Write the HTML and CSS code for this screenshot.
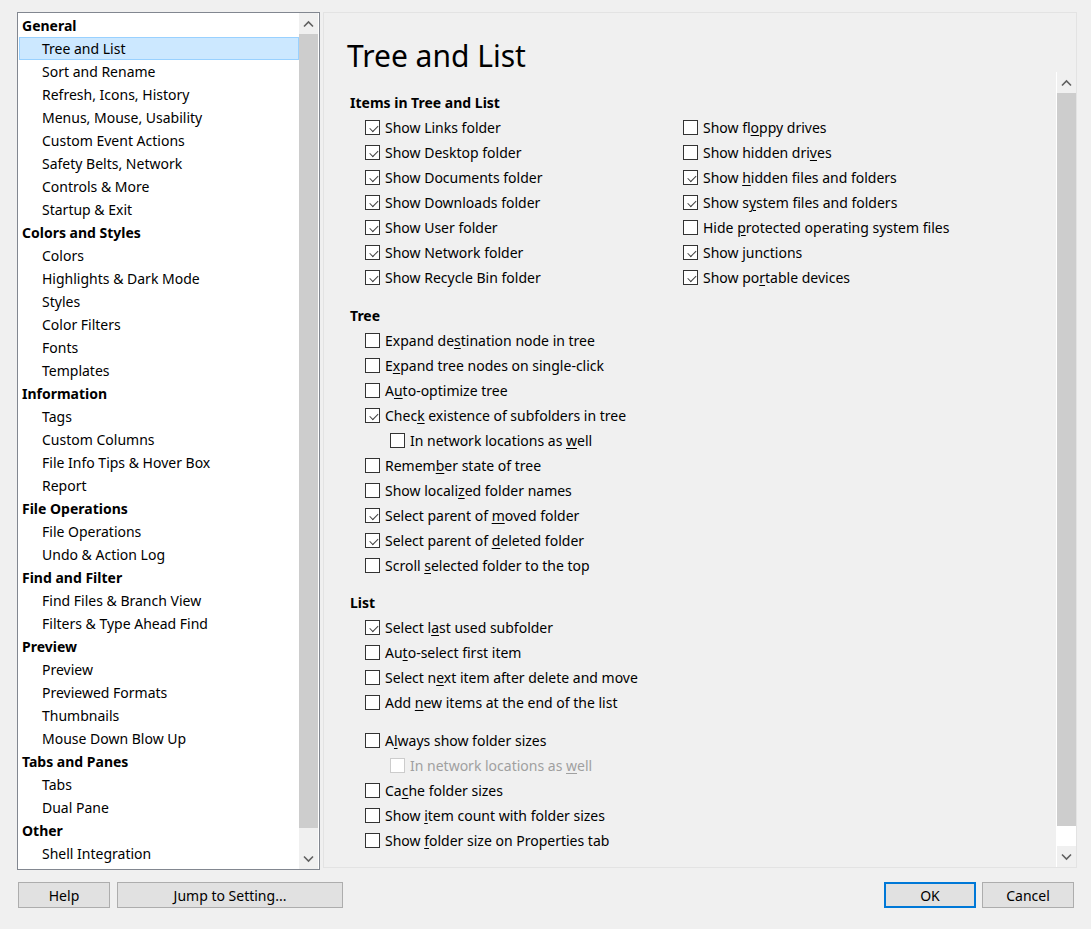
FILE: index.html
```html
<!DOCTYPE html>
<html lang="en">
<head>
    <meta charset="UTF-8">
    <meta name="viewport" content="width=device-width, initial-scale=1.0">
    <title>Tree and List</title>
    <link rel="stylesheet" href="styles.css">
</head>
<body>
    <div class="dialog">
        <div class="main">
            <div class="nav">
                <ul class="nav-list">
                    <li class="nav-group">General</li>
                    <li class="nav-item selected">Tree and List</li>
                    <li class="nav-item">Sort and Rename</li>
                    <li class="nav-item">Refresh, Icons, History</li>
                    <li class="nav-item">Menus, Mouse, Usability</li>
                    <li class="nav-item">Custom Event Actions</li>
                    <li class="nav-item">Safety Belts, Network</li>
                    <li class="nav-item">Controls &amp; More</li>
                    <li class="nav-item">Startup &amp; Exit</li>
                    <li class="nav-group">Colors and Styles</li>
                    <li class="nav-item">Colors</li>
                    <li class="nav-item">Highlights &amp; Dark Mode</li>
                    <li class="nav-item">Styles</li>
                    <li class="nav-item">Color Filters</li>
                    <li class="nav-item">Fonts</li>
                    <li class="nav-item">Templates</li>
                    <li class="nav-group">Information</li>
                    <li class="nav-item">Tags</li>
                    <li class="nav-item">Custom Columns</li>
                    <li class="nav-item">File Info Tips &amp; Hover Box</li>
                    <li class="nav-item">Report</li>
                    <li class="nav-group">File Operations</li>
                    <li class="nav-item">File Operations</li>
                    <li class="nav-item">Undo &amp; Action Log</li>
                    <li class="nav-group">Find and Filter</li>
                    <li class="nav-item">Find Files &amp; Branch View</li>
                    <li class="nav-item">Filters &amp; Type Ahead Find</li>
                    <li class="nav-group">Preview</li>
                    <li class="nav-item">Preview</li>
                    <li class="nav-item">Previewed Formats</li>
                    <li class="nav-item">Thumbnails</li>
                    <li class="nav-item">Mouse Down Blow Up</li>
                    <li class="nav-group">Tabs and Panes</li>
                    <li class="nav-item">Tabs</li>
                    <li class="nav-item">Dual Pane</li>
                    <li class="nav-group">Other</li>
                    <li class="nav-item">Shell Integration</li>
                </ul>
                <div class="scrollbar nav-scroll">
                    <div class="arrow"><svg width="11" height="8" viewBox="0 0 11 8"><path d="M1 6.5 L5.5 2 L10 6.5" fill="none" stroke="#606060" stroke-width="1.6"/></svg></div>
                    <div class="thumb"></div>
                    <div class="track"></div>
                    <div class="arrow"><svg width="11" height="8" viewBox="0 0 11 8"><path d="M1 1.5 L5.5 6 L10 1.5" fill="none" stroke="#606060" stroke-width="1.6"/></svg></div>
                </div>
            </div>

            <div class="page">
                <h1 class="page-title">Tree and List</h1>
                <div class="page-body">
                    <div class="options">
                        <div class="section-title">Items in Tree and List</div>
                        <div class="two-cols">
                            <div class="col">
                                <div class="opt"><span class="box checked"></span><span>Show Links folder</span></div>
                                <div class="opt"><span class="box checked"></span><span>Show Desktop folder</span></div>
                                <div class="opt"><span class="box checked"></span><span>Show Documents folder</span></div>
                                <div class="opt"><span class="box checked"></span><span>Show Downloads folder</span></div>
                                <div class="opt"><span class="box checked"></span><span>Show User folder</span></div>
                                <div class="opt"><span class="box checked"></span><span>Show Network folder</span></div>
                                <div class="opt"><span class="box checked"></span><span>Show Recycle Bin folder</span></div>
                            </div>
                            <div class="col">
                                <div class="opt"><span class="box"></span><span>Show fl<u>o</u>ppy drives</span></div>
                                <div class="opt"><span class="box"></span><span>Show hidden dri<u>v</u>es</span></div>
                                <div class="opt"><span class="box checked"></span><span>Show <u>h</u>idden files and folders</span></div>
                                <div class="opt"><span class="box checked"></span><span>Show s<u>y</u>stem files and folders</span></div>
                                <div class="opt"><span class="box"></span><span>Hide <u>p</u>rotected operating system files</span></div>
                                <div class="opt"><span class="box checked"></span><span>Show <u>j</u>unctions</span></div>
                                <div class="opt"><span class="box checked"></span><span>Show po<u>r</u>table devices</span></div>
                            </div>
                        </div>

                        <div class="section-title spaced">Tree</div>
                        <div class="col">
                            <div class="opt"><span class="box"></span><span>Expand de<u>s</u>tination node in tree</span></div>
                            <div class="opt"><span class="box"></span><span>E<u>x</u>pand tree nodes on single-click</span></div>
                            <div class="opt"><span class="box"></span><span>A<u>u</u>to-optimize tree</span></div>
                            <div class="opt"><span class="box checked"></span><span>Chec<u>k</u> existence of subfolders in tree</span></div>
                            <div class="opt sub"><span class="box"></span><span>In network locations as <u>w</u>ell</span></div>
                            <div class="opt"><span class="box"></span><span>Remem<u>b</u>er state of tree</span></div>
                            <div class="opt"><span class="box"></span><span>Show locali<u>z</u>ed folder names</span></div>
                            <div class="opt"><span class="box checked"></span><span>Select parent of <u>m</u>oved folder</span></div>
                            <div class="opt"><span class="box checked"></span><span>Select parent of <u>d</u>eleted folder</span></div>
                            <div class="opt"><span class="box"></span><span>Scroll <u>s</u>elected folder to the top</span></div>
                        </div>

                        <div class="section-title spaced">List</div>
                        <div class="col">
                            <div class="opt"><span class="box checked"></span><span>Select l<u>a</u>st used subfolder</span></div>
                            <div class="opt"><span class="box"></span><span>Au<u>t</u>o-select first item</span></div>
                            <div class="opt"><span class="box"></span><span>Select n<u>e</u>xt item after delete and move</span></div>
                            <div class="opt"><span class="box"></span><span>Add <u>n</u>ew items at the end of the list</span></div>
                            <div class="opt spaced"><span class="box"></span><span>A<u>l</u>ways show folder sizes</span></div>
                            <div class="opt sub disabled"><span class="box"></span><span>In network locations as <u>w</u>ell</span></div>
                            <div class="opt"><span class="box"></span><span>Ca<u>c</u>he folder sizes</span></div>
                            <div class="opt"><span class="box"></span><span>Show <u>i</u>tem count with folder sizes</span></div>
                            <div class="opt"><span class="box"></span><span>Show <u>f</u>older size on Properties tab</span></div>
                        </div>
                    </div>
                    <div class="scrollbar page-scroll">
                        <div class="arrow"><svg width="11" height="8" viewBox="0 0 11 8"><path d="M1 6.5 L5.5 2 L10 6.5" fill="none" stroke="#606060" stroke-width="1.6"/></svg></div>
                        <div class="thumb"></div>
                        <div class="track"></div>
                        <div class="arrow"><svg width="11" height="8" viewBox="0 0 11 8"><path d="M1 1.5 L5.5 6 L10 1.5" fill="none" stroke="#606060" stroke-width="1.6"/></svg></div>
                    </div>
                </div>
            </div>
        </div>

        <div class="buttons">
            <button class="btn btn-help">Help</button>
            <button class="btn btn-jump">Jump to Setting...</button>
            <span class="spacer"></span>
            <button class="btn btn-ok">OK</button>
            <button class="btn btn-cancel">Cancel</button>
        </div>
    </div>
</body>
</html>
```

FILE: styles.css
```css
body {
    margin: 0;
    background-color: #f0f0f0;
    font-family: "Noto Sans", "Liberation Sans", sans-serif;
    font-size: 14px;
    color: #000;
}
.dialog {
    width: 1091px;
    height: 929px;
    padding: 12px 0 0 17px;
    box-sizing: border-box;
}
.main {
    display: flex;
    align-items: flex-start;
    gap: 3px;
}

/* left tree */
.nav {
    width: 303px;
    height: 858px;
    box-sizing: border-box;
    border: 1px solid #828790;
    background-color: #fff;
    display: flex;
}
.nav-list {
    list-style-type: none;
    margin: 0;
    padding: 1px 0 0 0;
    flex: 1;
}
.nav-list li {
    height: 23px;
    line-height: 23px;
    white-space: nowrap;
}
.nav-group {
    font-weight: bold;
    padding-left: 4px;
}
.nav-item {
    padding-left: 24px;
}
.nav-item.selected {
    margin-left: 1px;
    padding-left: 22px;
    background-color: #cce8ff;
    border: 1px solid #99d1ff;
    line-height: 21px;
    box-sizing: border-box;
}

/* scrollbars */
.scrollbar {
    width: 19px;
    display: flex;
    flex-direction: column;
    background-color: #f0f0f0;
}
.nav-scroll {
    margin-right: 1px;
}
.arrow {
    height: 21px;
    display: flex;
    align-items: center;
    justify-content: center;
    flex-shrink: 0;
}
.thumb {
    background-color: #cdcdcd;
    flex: 1;
}
.nav-scroll .track {
    height: 20px;
}
.page-scroll {
    border-left: 1px solid #fff;
}
.page-scroll .track {
    height: 20px;
    background-color: #fff;
}

/* right page */
.page {
    width: 754px;
    height: 856px;
    box-sizing: border-box;
    border: 1px solid #e3e3e3;
    display: flex;
    flex-direction: column;
}
.page-title {
    margin: 0;
    height: 59px;
    padding: 26px 0 0 23px;
    box-sizing: border-box;
    display: flex;
    align-items: center;
    font-size: 30px;
    font-weight: normal;
    line-height: 0;
}
.page-body {
    flex: 1;
    display: flex;
}
.options {
    flex: 1;
    padding: 18px 0 0 26px;
}
.section-title {
    font-weight: bold;
    height: 25px;
    line-height: 25px;
}
.section-title.spaced {
    margin-top: 12.5px;
}
.two-cols {
    display: flex;
}
.two-cols .col {
    width: 318px;
}
.opt {
    height: 25px;
    display: flex;
    align-items: center;
    padding-left: 15px;
    white-space: nowrap;
}
.opt.sub {
    padding-left: 40px;
}
.opt.spaced {
    margin-top: 13px;
}
.opt u {
    text-underline-offset: 2px;
}
.box {
    width: 15px;
    height: 15px;
    box-sizing: border-box;
    border: 1px solid #333;
    background-color: #fff;
    margin-right: 5px;
    flex-shrink: 0;
    position: relative;
}
.box.checked::after {
    content: "";
    position: absolute;
    left: 3px;
    top: 2px;
    width: 7px;
    height: 3.5px;
    border-left: 1px solid #404040;
    border-bottom: 1px solid #404040;
    transform: rotate(-45deg) translate(-1px, 2px);
}
.opt.disabled {
    color: #a0a0a0;
}
.opt.disabled .box {
    border-color: #cccccc;
}

/* bottom buttons */
.buttons {
    display: flex;
    margin: 12px 0 0 1px;
    width: 1056px;
}
.btn {
    height: 26px;
    width: 92px;
    background-color: #e1e1e1;
    border: 1px solid #adadad;
    font-family: "Noto Sans", "Liberation Sans", sans-serif;
    font-size: 14px;
    color: #000;
    padding: 0;
}
.btn-help {
    margin-right: 7px;
}
.btn-jump {
    width: 226px;
}
.btn-ok {
    border: 2px solid #0078d7;
    margin-right: 6px;
}
.spacer {
    flex: 1;
}
```
